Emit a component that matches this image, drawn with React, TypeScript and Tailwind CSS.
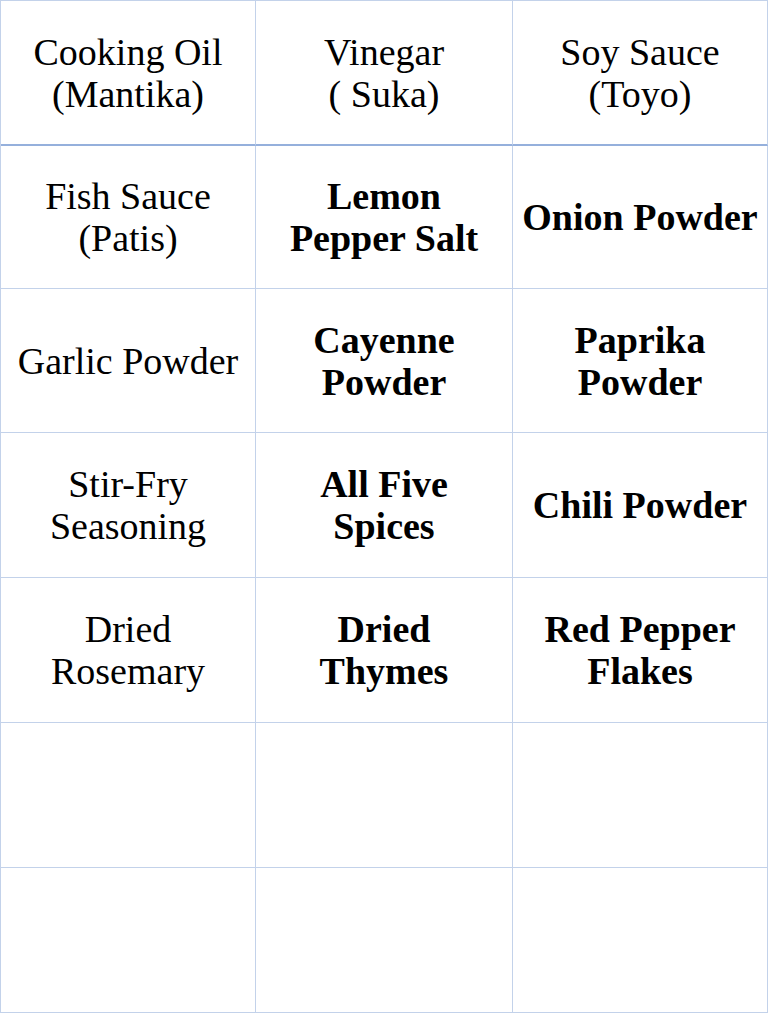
import React from "react";

type Cell = { lines: string[]; bold?: boolean };

const rows: Cell[][] = [
  [
    { lines: ["Cooking Oil", "(Mantika)"] },
    { lines: ["Vinegar", "( Suka)"] },
    { lines: ["Soy Sauce", "(Toyo)"] },
  ],
  [
    { lines: ["Fish Sauce", "(Patis)"] },
    { lines: ["Lemon", "Pepper Salt"], bold: true },
    { lines: ["Onion Powder"], bold: true },
  ],
  [
    { lines: ["Garlic Powder"] },
    { lines: ["Cayenne", "Powder"], bold: true },
    { lines: ["Paprika", "Powder"], bold: true },
  ],
  [
    { lines: ["Stir-Fry", "Seasoning"] },
    { lines: ["All Five", "Spices"], bold: true },
    { lines: ["Chili Powder"], bold: true },
  ],
  [
    { lines: ["Dried", "Rosemary"] },
    { lines: ["Dried", "Thymes"], bold: true },
    { lines: ["Red Pepper", "Flakes"], bold: true },
  ],
  [{ lines: [] }, { lines: [] }, { lines: [] }],
  [{ lines: [] }, { lines: [] }, { lines: [] }],
];

const heights = ["h-[145px]", "h-[143px]", "h-[144px]", "h-[145px]", "h-[145px]", "h-[145px]", "h-[145px]"];

export default function App() {
  return (
    <div
      className="w-[768px] h-[1024px] bg-white text-black"
      style={{ fontFamily: '"Liberation Serif", "Times New Roman", serif' }}
    >
      <div className="grid grid-cols-[255px_257px_255px] border-l border-t border-[#c3d2ea]">
        {rows.map((row, ri) =>
          row.map((cell, ci) => (
            <div
              key={`${ri}-${ci}`}
              className={`${heights[ri]} flex flex-col items-center justify-center text-center border-r border-[#c3d2ea] ${
                ri === 0 ? "border-b-2 border-b-[#95b0dc]" : "border-b border-b-[#c3d2ea]"
              } ${cell.bold ? "font-bold" : "font-normal"} text-[38px] leading-[42px] whitespace-nowrap`}
            >
              {cell.lines.map((l, i) => (
                <div key={i}>{l}</div>
              ))}
            </div>
          ))
        )}
      </div>
    </div>
  );
}
